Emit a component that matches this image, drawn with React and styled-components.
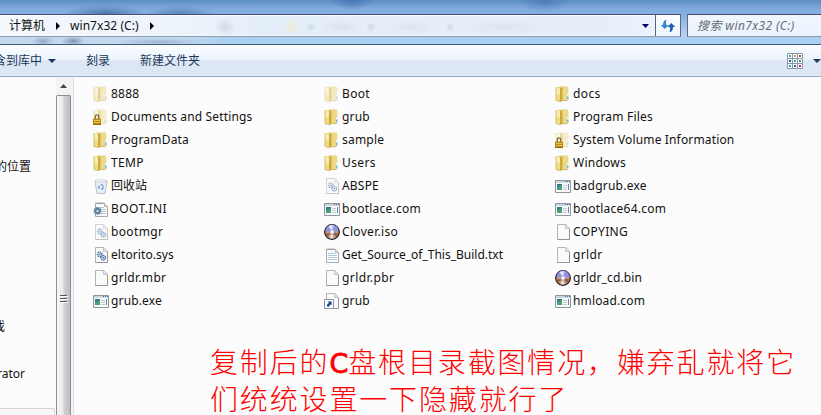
import React from "react";
import styled, { createGlobalStyle } from "styled-components";

const Global = createGlobalStyle`
  * { box-sizing: border-box; }
  body { margin: 0; overflow: hidden; }
`;

const Window = styled.div`
  width: 821px;
  height: 415px;
  overflow: hidden;
  display: flex;
  flex-direction: column;
  background: #fcfcfc;
  font: 12px/16px "Noto Sans", "Noto Sans CJK SC", sans-serif;
  color: #111;
`;

const Glass = styled.header`
  flex: none;
  height: 44px;
  padding-top: 14px;
  display: flex;
  gap: 6px;
  background:
    radial-gradient(ellipse 22px 10px at 352px 0, #3a69a6aa, transparent),
    radial-gradient(ellipse 26px 12px at 545px 0, #4273b0aa, transparent),
    radial-gradient(ellipse 40px 9px at 105px 14px, #2a4f8c99, transparent),
    radial-gradient(ellipse 35px 9px at 180px 15px, #2f62a099, transparent),
    radial-gradient(ellipse 12px 5px at 73px 41px, #4f6f9299, transparent),
    radial-gradient(ellipse 12px 5px at 43px 41px, #6784a488, transparent),
    radial-gradient(ellipse 45px 4px at 160px 42px, #7b9bbd88, transparent),
    linear-gradient(90deg, #c3d9ee 0 190px, #a9d0f0 225px, #a9cff5 821px) 0 37px / 100% 7px no-repeat,
    linear-gradient(#5b8dc5 0, #82abdd 9px, #83aee0 13px, #b6d2ef 36px, #bcd7f2 44px);
`;

const AddressBar = styled.div`
  width: 681px;
  height: 23px;
  display: flex;
  align-items: center;
  border: 1px solid #8a9bb2;
  border-top-color: #47506b;
  border-left: 0;
  border-right-color: #5e6a80;
  box-shadow: inset 0 1px #fafcff, inset 0 -1px #f4f9fe;
  background:
    radial-gradient(ellipse 11px 10px at 225px 12px, #c4d1e1aa, transparent),
    radial-gradient(ellipse 8px 8px at 292px 12px, #f0ebd2, transparent),
    radial-gradient(ellipse 5px 5px at 311px 12px, #cfd9e4, transparent),
    radial-gradient(ellipse 22px 7px at 341px 12px, #d9e1ebcc, transparent),
    radial-gradient(ellipse 5px 5px at 371px 12px, #cfd9e4, transparent),
    radial-gradient(ellipse 26px 7px at 410px 12px, #dbe3edcc, transparent),
    radial-gradient(ellipse 5px 5px at 450px 12px, #cfd9e4, transparent),
    radial-gradient(ellipse 46px 7px at 505px 12px, #dbe2eccc, transparent),
    linear-gradient(90deg, #f5f8fd, #edf3fb 190px, #e4eef9 260px, #e6eef9 600px, #eef5fd);
`;

const Crumb = styled.span`
  letter-spacing: ${(p) => p.$track || 0}px;
  margin-left: ${(p) => p.$gap}px;
  white-space: nowrap;
`;

const Glyph = styled.svg`
  flex: none;
  display: block;
  margin-left: ${(p) => p.$gap || 0}px;
`;

const Spacer = styled.div`flex: 1;`;

const Refresh = styled.div`
  width: 25px;
  height: 21px;
  margin-left: 6px;
  border-left: 1px solid #59667c;
  display: grid;
  place-items: center;
  background: linear-gradient(#fcfeff, #edf5fe);
`;

const Search = styled.div`
  flex: 1;
  height: 23px;
  padding-left: 9px;
  display: flex;
  align-items: center;
  border: 1px solid #8a9bb2;
  border-top-color: #47506b;
  border-left-color: #5e6a80;
  border-right: 0;
  background: linear-gradient(#f1f6fd, #eaf3fd);
  color: #686d73;
  font-style: italic;
  letter-spacing: 0.4px;
  white-space: nowrap;
`;

const Toolbar = styled.nav`
  flex: none;
  height: 33px;
  display: flex;
  align-items: center;
  border-top: 1px solid #405b7c;
  border-bottom: 1px solid #97a9c4;
  background: linear-gradient(#fff 0, #f7fbff 4px, #e9f3fb 15px, #dce6f4 15px, #dce6f4 29px, #e6eff9 31px);
  color: #1e395b;
`;

const Command = styled.span`
  white-space: nowrap;
  margin-left: ${(p) => p.$gap}px;
`;

const Body = styled.main`
  flex: 1;
  min-height: 0;
  display: flex;
`;

const Sidebar = styled.aside`
  width: 56px;
  flex: none;
  overflow: hidden;
  display: flex;
  flex-direction: column;
  align-items: flex-start;
`;

const SideText = styled.span`
  margin-top: ${(p) => p.$top}px;
  margin-left: ${(p) => p.$left}px;
  white-space: nowrap;
`;

const SidePanel = styled.div`
  width: 55px;
  height: 12px;
  margin-top: 26px;
  border: 1px solid #d0d0d0;
  border-left: 0;
  border-bottom: 0;
  border-radius: 0 3px 0 0;
  background: #f7f7f7;
`;

const Scrollbar = styled.div`
  width: 18px;
  flex: none;
  display: flex;
  flex-direction: column;
  align-items: flex-start;
  background: #f3f3f4;
  border-right: 1px solid #d9e3f2;
`;

const ScrollUp = styled.div`
  width: 15px;
  height: 18px;
  display: grid;
  place-items: center;
`;

const Thumb = styled.div`
  width: 15px;
  flex: 1;
  border: 1px solid #8e8e92;
  border-bottom: 0;
  border-radius: 2px 2px 0 0;
  background: linear-gradient(90deg, #f6f6f6, #e9e9eb 45%, #d0d0d4 55%, #bcbcc2);
  padding: 195px 0 0 3px;
`;

const Content = styled.section`
  flex: 1;
  padding: 5px 0 0 18px;
`;

const Files = styled.div`
  display: grid;
  grid-template-columns: repeat(3, 231px);
  grid-auto-rows: 23px;
`;

const File = styled.div`
  display: flex;
  align-items: center;
  gap: 2px;
  padding-left: 1px;
`;

const FileName = styled.span`
  white-space: nowrap;
  letter-spacing: ${(p) => p.$track || 0}px;
`;

const Caption = styled.p`
  margin: 31px 0 0 118px;
  font: 300 28px/37px "Noto Sans CJK SC", sans-serif;
  letter-spacing: 1.85px;
  color: #f00;
  white-space: nowrap;
`;

const CaptionLatin = styled.span`
  font: 400 27px/30px "DejaVu Sans", sans-serif;
  letter-spacing: 0;
  -webkit-text-stroke: 0.8px #f00;
`;

const Triangle = ({ gap, w = 7, h = 4, color = "#1e395b" }) => (
  <Glyph $gap={gap} width={w} height={h} viewBox="0 0 8 4" preserveAspectRatio="none">
    <path d="M0 0h8L4 4z" fill={color} />
  </Glyph>
);

const CrumbArrow = ({ gap }) => (
  <Glyph $gap={gap} width="4" height="8" viewBox="0 0 4 8"><path d="M0 0l4 4-4 4z" fill="#000" /></Glyph>
);

const Folder = () => (
  <>
    <path d="M1.500 1.200L6 .5h6.500l.7 1.200v12l-1 .8H6L1.500 14z" fill="#e4cd70" />
    <path d="M7 1h5.500l.6 1v11.500l-1 .7H7z" fill="#ecd987" />
    <path d="M1 1.200l4.500.7V15.500l-4.500-1z" fill="#f8edb0" />
    <path d="M1.200 8l4.300 .5v6.700l-4.300-1z" fill="#efdc80" />
    <path d="M5 2l2.500-.6v13.200L5 15.700z" fill="#cdaa3e" />
    <path d="M1 1.200v13.300L5 15.600 7.500 14.600h4.700l1-1" fill="none" stroke="#c9a845" strokeWidth=".7" />
    <path d="M12 8h1.500v5.500H12z" fill="#eef6f6" />
    <path d="M12.200 10.500h1.100v2.800h-1.100z" fill="#48a9d2" />
  </>
);

const Page = () => (
  <>
    <path d="M2.500.5h8.300l3.700 3.700v11.300h-12z" fill="#fafafa" stroke="#b4b4b4" />
    <path d="M14.500 5v10.500h-12" fill="none" stroke="#959595" />
    <path d="M10.500.7v3.800h3.800" fill="#e6e6e6" stroke="#c2c2c2" />
  </>
);

const Gears = () => (
  <>
    <circle cx="6.800" cy="7.300" r="2.300" fill="#dbe8f4" stroke="#527aa8" strokeWidth="1.400" strokeDasharray="1.300 .6" />
    <circle cx="10.200" cy="10.700" r="2.300" fill="#dbe8f4" stroke="#426c9f" strokeWidth="1.400" strokeDasharray="1.300 .6" />
    <circle cx="6.800" cy="7.300" r=".8" fill="#315f98" />
    <circle cx="10.200" cy="10.700" r=".8" fill="#315f98" />
  </>
);

const Notes = () => (
  <>
    <path d="M2.500 2.500h9l3 3v10h-12z" fill="#fafbfc" stroke="#a8a8a8" />
    <path d="M3 1.500l1 1 1-1 1 1 1-1 1 1 1-1 1 1 1-1" fill="none" stroke="#999" strokeWidth=".9" />
    <path d="M11.500 2.500v3h3" fill="#ddd" stroke="#b5b5b5" />
    <path d="M4 6.500h7M4 8.500h9M4 10.500h9M4 12.500h9" stroke="#b5cad7" />
  </>
);

const art = {
  folder: <Folder />,
  faded: <g opacity=".5"><Folder /></g>,
  locked: (
    <>
      <g opacity=".45"><Folder /></g>
      <path d="M2.300 10V7.700Q2.300 5.800 4 5.800T5.700 7.700V10" fill="none" stroke="#806b35" strokeWidth="1.300" />
      <path d="M0 9.700h8v6H0z" fill="#b98a17" />
      <path d="M1 11.500h6M1 13.500h6" stroke="#ebc44c" />
      <path d="M0 15.500h8" stroke="#946c0b" />
    </>
  ),
  bin: (
    <>
      <path d="M2 3h12l-2 12.500H4z" fill="#e8eff6" stroke="#b7c4d1" />
      <path d="M2 3l2-1h8l2 1-2 1H4z" fill="#fafcfe" stroke="#bcc9d4" strokeWidth=".7" />
      <circle cx="8" cy="9" r="2.200" fill="none" stroke="#79a7df" strokeWidth="1.500" strokeDasharray="3 1.500" />
    </>
  ),
  ini: (
    <>
      <Notes />
      <circle cx="4.500" cy="10" r="3.300" fill="#7897b1" stroke="#577b9b" strokeWidth="1.400" strokeDasharray="1.300 .9" />
      <circle cx="4.500" cy="10" r="1.700" fill="#dfeaf1" stroke="#416987" />
    </>
  ),
  sysFaded: <g opacity=".55"><Page /><Gears /></g>,
  sys: <><Page /><Gears /></>,
  page: <Page />,
  text: <Notes />,
  exe: (
    <>
      <path d="M.5 2.500h15v12H.5z" fill="#fafafa" stroke="#8d969e" />
      <path d="M1 3h14v2H1z" fill="#cbd7e1" />
      <path d="M10 3.500h1M12 3.500h1M14 3.500h1" stroke="#44779b" />
      <path d="M2 6h5v6H2z" fill="#35788c" />
      <path d="M2 9.500L7 7v5H2z" fill="#49a175" />
      <path d="M8 7.500h4M8 9.500h4M8 11.500h4" stroke="#c1c8ce" />
      <path d="M13.500 6v6" stroke="#5988b4" />
    </>
  ),
  disc: (
    <>
      <circle cx="8" cy="8" r="7.300" fill="#c99678" stroke="#15151b" strokeWidth="1.200" />
      <path d="M1.500 7A6.500 6.500 0 0 1 14.500 7L8 8z" fill="#8f92e4" />
      <path d="M8 8L4.500 2.300A6.500 6.500 0 0 1 9.500 1.600zM8 8l1.500 6.300a6.500 6.500 0 0 1-4 0z" fill="#eeeefa" opacity=".85" />
      <path d="M8 8l6.300 1.500a6.500 6.500 0 0 1-2 3.500zM8 8L1.700 10a6.500 6.500 0 0 0 1.500 2.500z" fill="#9a5b3c" />
      <circle cx="8" cy="8" r="2.400" fill="#e3deea" stroke="#9a8fac" strokeWidth=".7" />
      <circle cx="8" cy="8" r="1" fill="#fff" />
    </>
  ),
  link: (
    <>
      <Page />
      <path d="M.5 6.500h9v9h-9z" fill="#fff" stroke="#8995a3" />
      <path d="M3.600 8.500h4v4zM6 8.500l1.500 1.600L4.500 14 2.700 13q0-2 2.800-3.500z" fill="#174493" />
    </>
  ),
};

const files = [
  ["faded", "8888", 0.2], ["faded", "Boot", 0.35], ["folder", "docs", 0.4],
  ["locked", "Documents and Settings", 0.15], ["folder", "grub", 0.2], ["folder", "Program Files", 0.2],
  ["folder", "ProgramData", 0.2], ["folder", "sample", 0.2], ["locked", "System Volume Information", 0.15],
  ["folder", "TEMP", 0.3], ["folder", "Users", 0.4], ["folder", "Windows", 0.25],
  ["bin", "回收站", 0], ["sysFaded", "ABSPE", 0.2], ["exe", "badgrub.exe", 0.23],
  ["ini", "BOOT.INI", 0.42], ["exe", "bootlace.com", 0.25], ["exe", "bootlace64.com", 0.25],
  ["sysFaded", "bootmgr", 0.35], ["disc", "Clover.iso", 0.32], ["page", "COPYING", 0.35],
  ["sys", "eltorito.sys", 0.08], ["text", "Get_Source_of_This_Build.txt", 0], ["page", "grldr", 0.35],
  ["page", "grldr.mbr", 0.3], ["page", "grldr.pbr", 0.4], ["disc", "grldr_cd.bin", 0.15],
  ["exe", "grub.exe", 0.15], ["link", "grub", 0.2], ["exe", "hmload.com", 0.15],
];

const dots = ["#39a59a", "#c5a53a", "#c33b36", "#315d9f", "#39a59a", "#579b39", "#39a59a", "#315d9f", "#c33b36"];

export default function App() {
  return (
    <Window>
      <Global />
      <Glass>
        <AddressBar>
          <Crumb $gap={9}>计算机</Crumb>
          <CrumbArrow gap={11} />
          <Crumb $gap={10} $track={0.05}>win7x32 (C:)</Crumb>
          <CrumbArrow gap={11} />
          <Spacer />
          <Triangle w={7} h={4} color="#00005c" />
          <Refresh>
            <svg width="16" height="14" viewBox="0 0 16 14">
              <path d="M6.500 1Q3 1 3 6H.7l4 4 4-4H6.200Q5.500 3 6.500 1z" fill="#3586d0" />
              <path d="M9.500 13Q13 13 13 8h2.300l-4-4-4 4h2.500q.7 3-.3 5z" fill="#205fac" />
            </svg>
          </Refresh>
        </AddressBar>
        <Search>搜索 win7x32 (C:)</Search>
      </Glass>
      <Toolbar>
        <Command $gap={-6}>含到库中</Command>
        <Triangle gap={6} w={8} />
        <Command $gap={30}>刻录</Command>
        <Command $gap={30}>新建文件夹</Command>
        <Spacer />
        <svg width="16" height="16" viewBox="0 0 16 16">
          {dots.map((c, i) => (
            <g key={i} transform={`translate(${(i % 3) * 5} ${Math.floor(i / 3) * 5})`}>
              <path d="M.5.5h5v5h-5z" fill="#fff" stroke="#8799ad" />
              <path d="M2 2h2v2H2z" fill={c} />
            </g>
          ))}
        </svg>
        <Triangle gap={10} w={8} />
      </Toolbar>
      <Body>
        <Sidebar>
          <SideText $top={82} $left={-5}>的位置</SideText>
          <SideText $top={144} $left={-7}>戏</SideText>
          <SideText $top={31} $left={-3}>rator</SideText>
          <SidePanel />
        </Sidebar>
        <Scrollbar>
          <ScrollUp><svg width="7" height="4"><path d="M0 4l3.500-4L7 4z" fill="#444" /></svg></ScrollUp>
          <Thumb>
            <svg width="8" height="9">
              <path d="M1 1.500h7M1 4.500h7M1 7.500h7" stroke="#fff" transform="translate(0 1)" />
              <path d="M0 .5h7M0 3.500h7M0 6.500h7" stroke="#555" transform="translate(0 1)" />
            </svg>
          </Thumb>
        </Scrollbar>
        <Content>
          <Files>
            {files.map(([icon, name, track], i) => (
              <File key={i}>
                <svg width="16" height="16" viewBox="0 0 16 16">{art[icon]}</svg>
                <FileName $track={track}>{name}</FileName>
              </File>
            ))}
          </Files>
          <Caption>
            复制后的<CaptionLatin>C</CaptionLatin>盘根目录截图情况，嫌弃乱就将它<br />们统统设置一下隐藏就行了
          </Caption>
        </Content>
      </Body>
    </Window>
  );
}
